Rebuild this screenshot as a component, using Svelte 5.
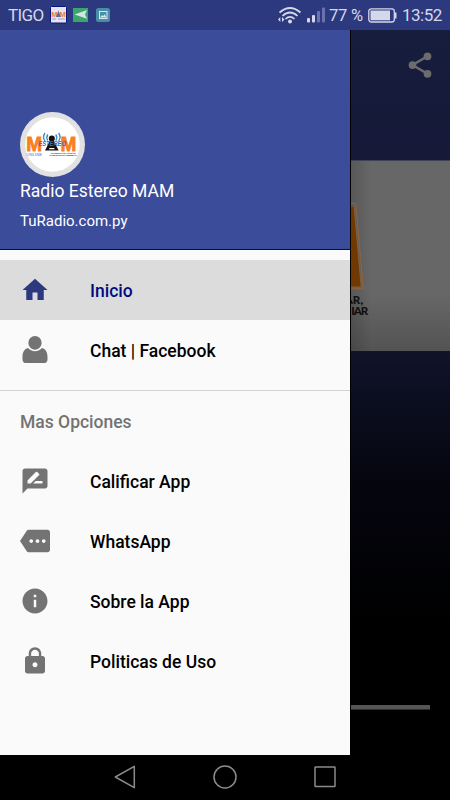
<script>
	const mainItems = [
		{ id: 'home', label: 'Inicio' },
		{ id: 'chat', label: 'Chat | Facebook' }
	];

	const optionItems = [
		{ id: 'rate', label: 'Calificar App' },
		{ id: 'whatsapp', label: 'WhatsApp' },
		{ id: 'about', label: 'Sobre la App' },
		{ id: 'policy', label: 'Politicas de Uso' }
	];

	const icons = {
		home: 'M10 20v-6h4v6h5v-8h3L12 3 2 12h3v8z',
		chat: 'M12 .8a5.3 5.3 0 0 0-5.3 5.4c0 3 2.3 5.5 5.3 5.5s5.3-2.5 5.3-5.5A5.3 5.3 0 0 0 12 .8zM6.400 10.400C3.500 11.100 2 13.700 2 17.300v2.200C2 21.300 3.200 22.400 5 22.400h14c1.800 0 3-1.100 3-2.900v-2.200c0-3.600-1.500-6.200-4.400-6.900-1.300 1.500-3.300 2.500-5.600 2.500s-4.300-1-5.600-2.500z',
		rate: 'M20 2H4c-1.100 0-1.990.9-1.990 2L2 22l4-4h14c1.100 0 2-.9 2-2V4c0-1.100-.9-2-2-2zM6 14v-2.470l6.880-6.880c.2-.2.510-.2.710 0l1.770 1.770c.2.2.2.510 0 .710L8.470 14H6zm12 0h-7.500l2-2H18v2z',
		whatsapp: 'M22 3H7c-.69 0-1.230.350-1.590.880L0 12l5.410 8.110c.36.530.970.890 1.660.890H22c1.100 0 2-.9 2-2V5c0-1.100-.9-2-2-2zM9 13.500c-.83 0-1.500-.67-1.500-1.500s.67-1.500 1.500-1.500 1.500.67 1.500 1.500-.67 1.500-1.500 1.500zm5 0c-.83 0-1.500-.67-1.500-1.500s.67-1.500 1.500-1.500 1.500.67 1.500 1.500-.67 1.500-1.500 1.500zm5 0c-.83 0-1.500-.67-1.500-1.500s.67-1.500 1.500-1.500 1.500.67 1.500 1.500-.67 1.500-1.500 1.500z',
		about: 'M12 2C6.480 2 2 6.480 2 12s4.480 10 10 10 10-4.480 10-10S17.520 2 12 2zm1 15h-2v-6h2v6zm0-8h-2V7h2v2z',
		policy: 'M18 8h-1V6c0-2.760-2.240-5-5-5S7 3.240 7 6v2H6c-1.100 0-2 .9-2 2v10c0 1.100.9 2 2 2h12c1.100 0 2-.9 2-2V10c0-1.100-.9-2-2-2zm-6 9c-1.100 0-2-.9-2-2s.9-2 2-2 2 .9 2 2-.9 2-2 2zm3.100-9H8.900V6c0-1.710 1.390-3.100 3.100-3.100s3.100 1.390 3.100 3.100v2z'
	};

	let selected = $state('home');
</script>

{#snippet menuItem(item)}
	<button
		class="menu-item"
		class:active={selected === item.id}
		onclick={() => (selected = item.id)}
		type="button"
	>
		<svg class="menu-icon" viewBox="0 0 24 24" aria-hidden="true">
			<path d={icons[item.id]} />
		</svg>
		<span class="menu-label">{item.label}</span>
	</button>
{/snippet}

{#snippet logo()}
	<g font-family="Liberation Sans, Arial, sans-serif" font-weight="bold">
		<g fill="#f9801d" stroke="#f9801d" stroke-width="0.9" font-size="21">
			<text x="6.300" y="38.500" textLength="15.800" lengthAdjust="spacingAndGlyphs">M</text>
			<text x="40.500" y="38.500" textLength="15.800" lengthAdjust="spacingAndGlyphs">M</text>
		</g>
		<g fill="none" stroke="#3f8fc4" stroke-width="1.400">
			<path d="M27.800 22.500q-2 3 0 6M25 21q-3 4.500 0 8M35.800 22.500q2 3 0 6M38.600 21q3 4.500 0 8" />
		</g>
		<circle cx="31.800" cy="26.500" r="3" fill="#111" />
		<path d="M30 28.500h3.600l5 10H25z" fill="#111" />
		<path d="M29.500 36h4.600l.6 1.300H28.900z" fill="#fff" />
		<text x="18.300" y="34.400" fill="#2f6be0" font-size="6.600" font-style="italic" textLength="27.700" lengthAdjust="spacingAndGlyphs">ESTEREO</text>
		<text x="6.300" y="43.600" fill="#3976e8" font-size="4.400" font-weight="normal" textLength="15.800" lengthAdjust="spacingAndGlyphs">ONLINE</text>
		<g fill="#333" font-size="2.200">
			<text x="31" y="42" textLength="25">NACIMOS PARA ADORAR,</text>
			<text x="29.500" y="44.400" textLength="27">LLAMADOS PARA GUERREAR</text>
		</g>
	</g>
{/snippet}

<div class="screen">
	<header class="status-bar">
		<span class="carrier">TIGO</span>
		<svg class="notifications" viewBox="0 0 62 18" aria-hidden="true">
			<rect x="0.500" y="0.500" width="16" height="16.500" rx="1" fill="#e6e3ec" stroke="#0b1282" />
			<g font-family="Liberation Sans, sans-serif" font-weight="bold" font-size="7.500" fill="#ea7d37">
				<text x="1.300" y="11">M</text>
				<text x="9.400" y="11">M</text>
			</g>
			<path d="M8.500 4.500l2.300 6.500H6z" fill="#596da5" />
			<path d="M2 13h4M8 13h7" stroke="#7895d6" stroke-width="0.800" />
			<rect x="23" y="2" width="15" height="14" fill="#3ca56d" />
			<path d="M24.500 8.500L37 4l-2 4.500 2 4.300z" fill="#d1e5e1" />
			<rect x="46" y="2" width="14" height="14" rx="2.500" fill="#488ea8" />
			<rect x="49.500" y="5.500" width="7.500" height="7" fill="none" stroke="#d6e6ee" />
			<path d="M50 11.500l2-2.500 1.200 1.200 1.300-2 2.200 3.300z" fill="#d6e6ee" />
		</svg>
		<div class="status-right">
			<svg class="wifi" viewBox="0 0 24 18" aria-hidden="true">
				<g fill="none" stroke="#d5d8e8" stroke-width="1.700">
					<path d="M1.500 6.500Q12 -2.500 22.500 6.500" />
					<path d="M4.500 10Q12 3 19.500 10" />
					<path d="M7.500 13Q12 8.800 16.500 13" />
				</g>
				<circle cx="12" cy="15.500" r="2" fill="#d5d8e8" />
				<path d="M0 13.500l2.300-2.500v5zM6.500 13.500L4 11v5z" fill="#d5d8e8" />
			</svg>
			<svg class="signal" viewBox="0 0 20 16" aria-hidden="true">
				<rect x="1" y="11" width="3" height="4.500" rx="1" fill="#d5d8e8" />
				<rect x="6" y="8" width="3" height="7.500" rx="1" fill="#d5d8e8" />
				<rect x="11" y="4" width="3" height="11.500" rx="1" fill="#6a73ac" />
				<rect x="16" y="0.500" width="3" height="15" rx="1" fill="#6a73ac" />
			</svg>
			<span class="battery-level">77 %</span>
			<svg class="battery" viewBox="0 0 29 15" aria-hidden="true">
				<rect x="0.800" y="0.800" width="25.500" height="13.200" rx="2.500" fill="none" stroke="#d5d8e8" stroke-width="1.300" />
				<rect x="2.500" y="2.500" width="19.500" height="9.800" fill="#d5d8e8" />
				<rect x="27" y="4.500" width="1.500" height="6" fill="#d5d8e8" />
			</svg>
			<span class="clock">13:52</span>
		</div>
	</header>

	<div class="content">
		<nav class="drawer">
			<div class="drawer-header">
				<svg class="avatar" viewBox="0 0 65 65" aria-hidden="true">
					<circle cx="32.500" cy="32.500" r="32.500" fill="#e1e1e1" />
					<circle cx="32.500" cy="32.500" r="27.300" fill="#fff" />
					{@render logo()}
				</svg>
				<div class="station">Radio Estereo MAM</div>
				<div class="site">TuRadio.com.py</div>
			</div>
			<div class="menu-group">
				{#each mainItems as item (item.id)}
					{@render menuItem(item)}
				{/each}
			</div>
			<div class="menu-group options">
				<div class="group-title">Mas Opciones</div>
				{#each optionItems as item (item.id)}
					{@render menuItem(item)}
				{/each}
			</div>
		</nav>

		<main class="player">
			<div class="toolbar">
				<svg class="share" viewBox="0 0 24 24" aria-label="Compartir">
					<path d="M18 5L6 12l12 7" />
					<circle cx="18" cy="5" r="3.100" />
					<circle cx="6" cy="12" r="3.100" />
					<circle cx="18" cy="19" r="3.100" />
				</svg>
			</div>
			<div class="banner">
				<svg viewBox="0 0 99 190" aria-hidden="true">
					<path d="M-2 42.500H4.800L12.300 127.800H-2" fill="none" stroke="#93633a" stroke-width="1" />
					<path d="M-2 45H3L10.200 126H-2z" fill="#713900" stroke="#7b6a58" stroke-width="0.800" />
					<path d="M0 139.500l1.300 3.200" stroke="#101010" stroke-width="1.600" />
					<g font-family="Lato, sans-serif" font-weight="900" font-size="11.500" fill="#101010">
						<text x="1.800" y="142.700" textLength="10.500">R,</text>
						<text x="0.200" y="154.300" textLength="17">IAR</text>
					</g>
				</svg>
			</div>
			<div class="controls">
				<div class="volume"></div>
			</div>
		</main>
	</div>

	<footer class="nav-bar">
		<svg viewBox="0 0 24 24" aria-label="Atrás"><path d="M2.300 12L21.300 1.300v21.400z" /></svg>
		<svg viewBox="0 0 24 24" aria-label="Inicio"><circle cx="12" cy="12" r="11" /></svg>
		<svg viewBox="0 0 24 24" aria-label="Recientes"><rect x="2" y="2" width="20" height="19.500" rx="0.500" /></svg>
	</footer>
</div>

<style>
	:global(body) {
		margin: 0;
		background: #000;
	}

	.screen {
		width: 450px;
		height: 800px;
		display: flex;
		flex-direction: column;
		overflow: hidden;
		background: #000;
		font-family: Roboto, sans-serif;
	}

	.screen svg {
		display: block;
		flex-shrink: 0;
	}

	.status-bar {
		height: 30px;
		flex-shrink: 0;
		box-sizing: border-box;
		padding: 0 8px;
		display: flex;
		align-items: center;
		background: #2d397e;
		color: #d5d8e8;
		white-space: nowrap;
	}

	.carrier {
		width: 42px;
		font-size: 17px;
		letter-spacing: -0.600px;
	}

	.notifications {
		width: 62px;
		height: 18px;
	}

	.status-right {
		margin-left: auto;
		display: flex;
		align-items: center;
	}

	.wifi {
		width: 24px;
		height: 18px;
		margin-right: 4px;
	}

	.signal {
		width: 20px;
		height: 16px;
		margin-right: 3px;
	}

	.battery-level {
		width: 39px;
		font-size: 16.500px;
		letter-spacing: -0.200px;
	}

	.battery {
		width: 29px;
		height: 15px;
		margin-right: 5px;
	}

	.clock {
		width: 40px;
		font-size: 17px;
		letter-spacing: -0.500px;
	}

	.content {
		height: 725px;
		flex-shrink: 0;
		display: flex;
	}

	.drawer {
		width: 350px;
		flex-shrink: 0;
		background: #fafafa;
	}

	.drawer-header {
		height: 220px;
		box-sizing: border-box;
		padding: 82px 20px 0;
		background: #3b4c9b;
		border-bottom: 1px solid #000080;
		color: #fff;
	}

	.avatar {
		width: 65px;
		height: 65px;
	}

	.station {
		margin-top: 2px;
		font-size: 17.500px;
		line-height: 24px;
	}

	.site {
		margin-top: 8px;
		font-size: 15px;
		line-height: 20px;
	}

	.menu-group {
		padding: 10px 0;
	}

	.options {
		padding: 0;
		border-top: 1px solid #d2d2d2;
	}

	.group-title {
		height: 60px;
		padding: 0 20px;
		font-size: 17.500px;
		font-weight: 500;
		line-height: 62px;
		color: #737373;
	}

	.menu-item {
		width: 100%;
		height: 60px;
		padding: 0 20px;
		border: none;
		background: none;
		display: flex;
		align-items: center;
		gap: 40px;
		font-family: inherit;
		font-size: 17.500px;
		font-weight: 500;
		color: #000;
		text-align: left;
		cursor: pointer;
	}

	.menu-label {
		padding-top: 2px;
	}

	.menu-icon {
		width: 30px;
		height: 30px;
		fill: #737373;
	}

	.menu-item.active {
		background: #dcdcdc;
		color: #000b80;
	}

	.active .menu-icon {
		fill: #2d397e;
	}

	.player {
		flex: 1;
		min-width: 0;
		display: flex;
		flex-direction: column;
		box-sizing: border-box;
		border-left: 1px solid #000;
		background: #000;
	}

	.toolbar {
		height: 130px;
		box-sizing: border-box;
		padding: 20px 15px;
		display: flex;
		justify-content: flex-end;
		background: linear-gradient(#161d3d, #161938);
	}

	.share {
		width: 30px;
		height: 30px;
		fill: #6c6c6c;
	}

	.share path {
		fill: none;
		stroke: #6c6c6c;
		stroke-width: 2;
	}

	.banner {
		height: 191px;
		box-sizing: border-box;
		border-top: 1px solid #3f4359;
		background: linear-gradient(90deg, rgba(0, 0, 0, 0.150), transparent 20px), linear-gradient(#676767 70%, #535353);
		overflow: hidden;
	}

	.banner svg {
		width: 99px;
		height: 190px;
	}

	.controls {
		flex: 1;
		padding: 354px 20px 0 0;
		background: linear-gradient(#10132a, #05060e 130px, #000 280px);
	}

	.volume {
		height: 4px;
		border-bottom: 1px solid #2e2e2e;
		background: #555;
	}

	.nav-bar {
		height: 45px;
		flex-shrink: 0;
		box-sizing: border-box;
		padding-bottom: 1px;
		display: flex;
		align-items: center;
		justify-content: center;
		gap: 76px;
		background: #000;
	}

	.nav-bar svg {
		width: 24px;
		height: 24px;
		fill: none;
		stroke: #8b8b8b;
		stroke-width: 1.500;
		stroke-linejoin: round;
	}
</style>
